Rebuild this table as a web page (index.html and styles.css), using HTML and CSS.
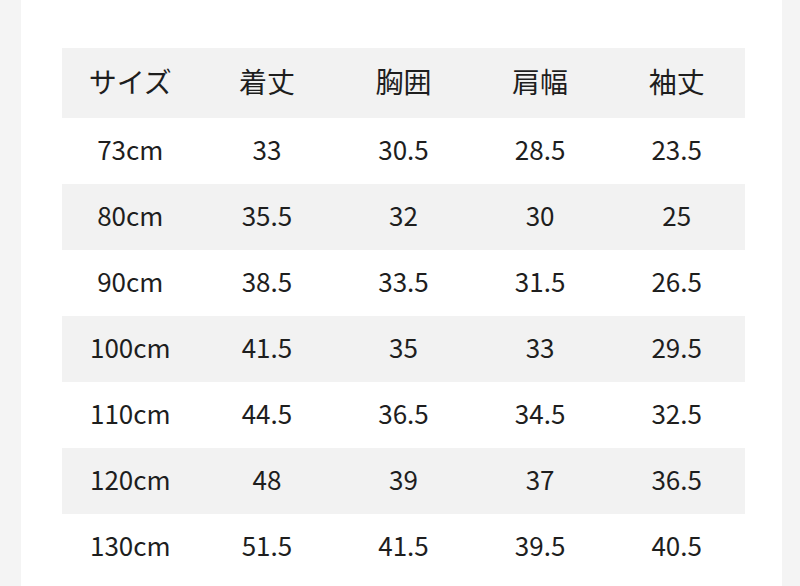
FILE: index.html
```html
<!DOCTYPE html>
<html lang="ja">
<head>
<meta charset="utf-8">
<link rel="stylesheet" href="styles.css">
</head>
<body>
<div class="card">
  <table class="size-table">
    <thead>
      <tr><th>サイズ</th><th>着丈</th><th>胸囲</th><th>肩幅</th><th>袖丈</th></tr>
    </thead>
    <tbody>
      <tr><td>73cm</td><td>33</td><td>30.5</td><td>28.5</td><td>23.5</td></tr>
      <tr class="alt"><td>80cm</td><td>35.5</td><td>32</td><td>30</td><td>25</td></tr>
      <tr><td>90cm</td><td>38.5</td><td>33.5</td><td>31.5</td><td>26.5</td></tr>
      <tr class="alt"><td>100cm</td><td>41.5</td><td>35</td><td>33</td><td>29.5</td></tr>
      <tr><td>110cm</td><td>44.5</td><td>36.5</td><td>34.5</td><td>32.5</td></tr>
      <tr class="alt"><td>120cm</td><td>48</td><td>39</td><td>37</td><td>36.5</td></tr>
      <tr><td>130cm</td><td>51.5</td><td>41.5</td><td>39.5</td><td>40.5</td></tr>
    </tbody>
  </table>
</div>
</body>
</html>
```
FILE: styles.css
```css
html, body {
  margin: 0;
  padding: 0;
  height: 100%;
  background: #f4f4f4;
  overflow: hidden;
}
.card {
  margin: 0 18px 0 21px;
  height: 586px;
  background: #ffffff;
  padding: 48px 0 0 41px;
  box-sizing: border-box;
}
.size-table {
  width: 683px;
  border-collapse: collapse;
  table-layout: fixed;
  font-family: "Noto Sans CJK JP", "Noto Sans", sans-serif;
  font-size: 26px;
  color: #1e1e1e;
}
.size-table th,
.size-table td {
  padding: 0 0 6px 0;
  text-align: center;
  font-weight: 400;
}
.size-table th {
  font-size: 28px;
  padding-bottom: 4px;
}
.size-table thead tr {
  background: #f2f2f2;
  height: 70px;
}
.size-table tbody tr {
  height: 66px;
}
.size-table tbody tr.alt {
  background: #f2f2f2;
}
```
